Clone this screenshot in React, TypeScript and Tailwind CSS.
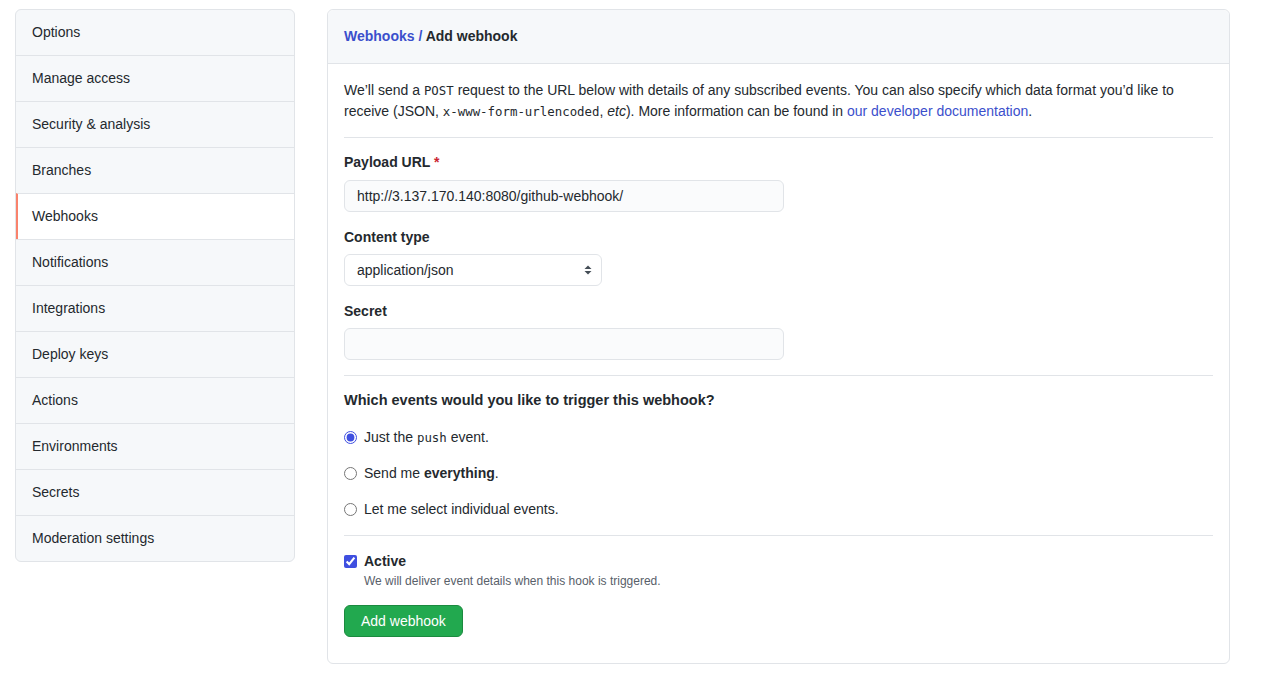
import React from "react";

const navItems = [
  "Options",
  "Manage access",
  "Security & analysis",
  "Branches",
  "Webhooks",
  "Notifications",
  "Integrations",
  "Deploy keys",
  "Actions",
  "Environments",
  "Secrets",
  "Moderation settings",
];

const mono = "font-['DejaVu_Sans_Mono',monospace] text-[12.4px]";

function Radio({ checked, children }: { checked?: boolean; children: React.ReactNode }) {
  return (
    <label className="flex items-center h-[21px] mb-[15px]">
      <input
        type="radio"
        name="events"
        defaultChecked={checked}
        className="w-[13px] h-[13px] m-0 mr-[7px] accent-[#3f4fe0]"
      />
      <span>{children}</span>
    </label>
  );
}

export default function App() {
  return (
    <div className="min-h-screen bg-white font-['Liberation_Sans',Arial,sans-serif] text-[14px] leading-[21px] text-[#24292e]">
      <div className="flex items-start pt-[9px] pl-[15px] gap-[32px]">
        {/* Sidebar */}
        <nav className="w-[280px] border border-[#e1e4e8] rounded-[6px] bg-[#f6f8fa] overflow-hidden">
          {navItems.map((item, i) => {
            const active = item === "Webhooks";
            return (
              <div
                key={item}
                className={`py-[12px] pr-[16px] ${i > 0 ? "border-t border-[#e1e4e8]" : ""} ${
                  active ? "bg-white border-l-2 border-l-[#f9826c] pl-[14px]" : "pl-[16px]"
                }`}
              >
                {item}
              </div>
            );
          })}
        </nav>

        {/* Main */}
        <div className="w-[903px] border border-[#e1e4e8] rounded-[6px] bg-white">
          <div className="bg-[#f6f8fa] border-b border-[#e1e4e8] rounded-t-[6px] px-[16px] py-[16px] font-bold">
            <span className="text-[#3b4fcc]">Webhooks / </span>
            <span>Add webhook</span>
          </div>

          <div className="px-[16px] pt-[16px] pb-[26px]">
            <p>
              We’ll send a <span className={mono}>POST</span> request to the URL below with details of any
              subscribed events. You can also specify which data format you’d like to receive (JSON,{" "}
              <span className={mono}>x-www-form-urlencoded</span>, <em>etc</em>). More information can be
              found in <span className="text-[#3b4fcc]">our developer documentation</span>.
            </p>

            <div className="border-t border-[#e1e4e8] mt-[15px] mb-[14px]" />

            <div className="font-bold">
              Payload URL <span className="text-[#cb2431]">*</span>
            </div>
            <div className="mt-[7px] w-[440px] h-[32px] border border-[#e1e4e8] rounded-[6px] bg-[#fafbfc] px-[12px] flex items-center">
              http://3.137.170.140:8080/github-webhook/
            </div>

            <div className="font-bold mt-[15px]">Content type</div>
            <div className="mt-[6px] w-[258px] h-[32px] border border-[#e1e4e8] rounded-[6px] bg-white pl-[12px] pr-[9px] flex items-center justify-between">
              <span>application/json</span>
              <svg width="8" height="12" viewBox="0 0 8 12" className="text-[#444d56]">
                <path d="M4 1.5 L7.5 5 H0.5 Z" fill="currentColor" />
                <path d="M4 10.5 L7.5 7 H0.5 Z" fill="currentColor" />
              </svg>
            </div>

            <div className="font-bold mt-[15px]">Secret</div>
            <div className="mt-[6px] w-[440px] h-[32px] border border-[#e1e4e8] rounded-[6px] bg-[#fafbfc]" />

            <div className="border-t border-[#e1e4e8] mt-[15px] mb-[14px]" />

            <div className="font-bold text-[14.5px]">Which events would you like to trigger this webhook?</div>
            <div className="mt-[16px]">
              <Radio checked>
                Just the <span className={mono}>push</span> event.
              </Radio>
              <Radio>
                Send me <strong>everything</strong>.
              </Radio>
              <Radio>Let me select individual events.</Radio>
            </div>

            <div className="border-t border-[#e1e4e8] mt-[1px] mb-[15px]" />

            <label className="flex items-center h-[21px]">
              <input
                type="checkbox"
                defaultChecked
                className="w-[13px] h-[13px] m-0 mr-[7px] accent-[#3f4fe0]"
              />
              <span className="font-bold">Active</span>
            </label>
            <div className="pl-[20px] text-[12px] leading-[16px] text-[#586069] mt-[1px]">
              We will deliver event details when this hook is triggered.
            </div>

            <button className="mt-[16px] h-[32px] px-[16px] rounded-[6px] bg-[#22a94f] border border-[#1b8a3f] text-white text-[14px] leading-[20px]">
              Add webhook
            </button>
          </div>
        </div>
      </div>
    </div>
  );
}
